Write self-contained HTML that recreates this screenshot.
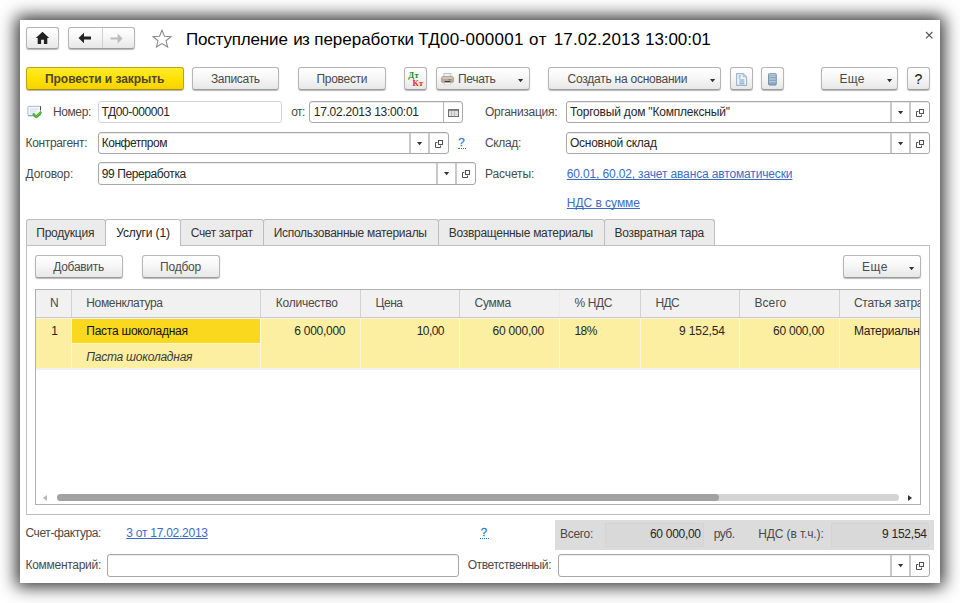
<!DOCTYPE html>
<html><head><meta charset="utf-8"><title>1C</title>
<style>
html,body{margin:0;padding:0;}
body{width:960px;height:603px;background:#fff;position:relative;overflow:hidden;font-family:"Liberation Sans",sans-serif;font-size:12px;}
body>*{position:absolute;box-sizing:border-box;}
.t{white-space:pre;}
.win{background:#fff;box-shadow:0 0 16px 4px rgba(0,0,0,.8);}
.btn{border:1px solid #b6b6b6;border-bottom-color:#9c9c9c;border-radius:3px;background:linear-gradient(#ffffff 0%,#f7f7f7 45%,#e7e7e7 100%);box-shadow:0 1px 1px rgba(0,0,0,.28);}
.ybtn{border:1px solid #c2a40e;border-bottom-color:#a98d10;border-radius:3px;background:linear-gradient(#ffeb30 0%,#ffe100 50%,#f6d300 100%);box-shadow:0 1px 1px rgba(0,0,0,.3);}
.fld{border:1px solid #a8a8a8;border-radius:3px;background:#fff;box-shadow:inset 0 1px 0 rgba(0,0,0,.08);}
.fld.ro{border-color:#d2d2d2;box-shadow:none;}
.vd{background:#c9c9c9;}
.tab{border:1px solid #bdbdbd;border-bottom:none;border-radius:3px 3px 0 0;background:#ebebeb;}
.tab.act{background:#fff;}
.panel{border:1px solid #c0c0c0;background:#fff;}
.tbl{border:1px solid #b0b0b0;background:#fff;}
.th{background:#f1f1f1;border-bottom:1px solid #c9c9c9;}
.ul{text-decoration:underline;}
svg{overflow:visible;}

</style></head>
<body>
<div class="win" style="left:20px;top:20px;width:920px;height:563px;"></div>
<div class="btn" style="left:26px;top:27px;width:33px;height:22px;"></div>
<svg style="left:35px;top:31px" width="15" height="14" viewBox="0 0 15 14"><path d="M7.5 0.8 L14.2 7 H12.3 V13 H8.9 V8.8 H6.1 V13 H2.7 V7 H0.8 Z" fill="#222"/></svg>
<div class="btn" style="left:68px;top:27px;width:67px;height:22px;"></div>
<div class="" style="left:101.5px;top:28px;width:1.0px;height:20px;background:#d0d0d0;"></div>
<svg style="left:78px;top:32px" width="14" height="12" viewBox="0 0 14 12"><path d="M0.5 6 L6 0.8 V4.6 H13 V7.4 H6 V11.2 Z" fill="#222"/></svg>
<svg style="left:110px;top:32.5px" width="13" height="11" viewBox="0 0 13 11"><path d="M12.6 5.5 L7.6 0.6 V4.5 H0.6 V6.5 H7.6 V10.4 Z" fill="#bcbcbc"/></svg>
<svg style="left:152px;top:29px" width="20" height="19" viewBox="0 0 20 19"><path d="M10 1.2 L12.5 7.2 L19 7.6 L14 11.8 L15.6 18 L10 14.6 L4.4 18 L6 11.8 L1 7.6 L7.5 7.2 Z" fill="#fff" stroke="#8a8a8a" stroke-width="1.1" stroke-linejoin="miter"/></svg>
<span class="t" style="left:185.90px;top:29.61px;font-size:17px;line-height:19px;letter-spacing:-0.158px;color:#000;">Поступление</span>
<span class="t" style="left:293.20px;top:29.61px;font-size:17px;line-height:19px;letter-spacing:-0.600px;color:#000;">из</span>
<span class="t" style="left:314.20px;top:29.61px;font-size:17px;line-height:19px;letter-spacing:-0.013px;color:#000;">переработки</span>
<span class="t" style="left:418.30px;top:29.61px;font-size:17px;line-height:19px;letter-spacing:0.246px;color:#000;">ТД00-000001</span>
<span class="t" style="left:529.00px;top:29.61px;font-size:17px;line-height:19px;letter-spacing:0.600px;color:#000;">от</span>
<span class="t" style="left:553.80px;top:29.61px;font-size:17px;line-height:19px;letter-spacing:0.123px;color:#000;">17.02.2013</span>
<span class="t" style="left:645.00px;top:29.61px;font-size:17px;line-height:19px;letter-spacing:-0.055px;color:#000;">13:00:01</span>
<svg style="left:925.2px;top:31.2px" width="8.4" height="8.4" viewBox="0 0 8.4 8.4"><path d="M1 1 L7.4 7.4 M7.4 1 L1 7.4" stroke="#5a5a5a" stroke-width="1.25" fill="none"/></svg>
<div class="ybtn" style="left:26px;top:67px;width:158px;height:23px;"></div>
<span class="t" style="left:45.00px;top:71.84px;font-size:12px;line-height:14px;letter-spacing:-0.048px;color:#4d4630;font-weight:bold;">Провести и закрыть</span>
<div class="btn" style="left:192px;top:67px;width:87px;height:23px;"></div>
<span class="t" style="left:210.91px;top:71.84px;font-size:12px;line-height:14px;letter-spacing:-0.300px;color:#4a4a4a;">Записать</span>
<div class="btn" style="left:298px;top:67px;width:88px;height:23px;"></div>
<span class="t" style="left:316.50px;top:71.84px;font-size:12px;line-height:14px;letter-spacing:-0.300px;color:#4a4a4a;">Провести</span>
<div class="btn" style="left:404px;top:67px;width:23px;height:23px;"></div>
<span class="t" style="left:408.20px;top:70.40px;font-size:8.5px;line-height:10.5px;letter-spacing:0.481px;color:#1a8a1a;font-weight:bold;font-family:'Liberation Serif',serif;">Дт</span>
<span class="t" style="left:412.60px;top:77.60px;font-size:8.5px;line-height:10.5px;letter-spacing:0.441px;color:#f02525;font-weight:bold;font-family:'Liberation Serif',serif;">Кт</span>
<div class="btn" style="left:436px;top:67px;width:94px;height:23px;"></div>
<svg style="left:441px;top:73.4px" width="13" height="12.2" viewBox="0 0 13 12.2"><rect x="2.9" y="0.4" width="7" height="4.6" fill="#e8f0f8" stroke="#a9bccf" stroke-width="0.8"/><rect x="0.4" y="3.6" width="12.2" height="6" rx="1.8" fill="#b9a99b" stroke="#a09488" stroke-width="0.7"/><rect x="1.2" y="4.2" width="10.6" height="1.6" rx="0.8" fill="#d8cfc7"/><rect x="7.4" y="6.2" width="1.3" height="1" fill="#e04030"/><rect x="9.2" y="6.2" width="1.3" height="1" fill="#3fae3f"/><rect x="3.6" y="8.2" width="5.8" height="1.5" fill="#222"/><rect x="3.4" y="9.6" width="6.2" height="2.3" fill="#fdfdfd" stroke="#c4c4c4" stroke-width="0.6"/></svg>
<span class="t" style="left:458.00px;top:71.84px;font-size:12px;line-height:14px;letter-spacing:-0.312px;color:#4a4a4a;">Печать</span>
<div class="btn" style="left:548px;top:67px;width:173px;height:23px;"></div>
<span class="t" style="left:567.50px;top:71.84px;font-size:12px;line-height:14px;letter-spacing:-0.237px;color:#4a4a4a;">Создать на основании</span>
<div class="btn" style="left:730px;top:67px;width:23px;height:23px;"></div>
<svg style="left:735.7px;top:72.8px" width="11.2" height="13" viewBox="0 0 11.2 13"><path d="M0.6 0.6 H7.2 L10.6 3.8 V12.4 H0.6 Z" fill="#edf3f9" stroke="#9db6ce" stroke-width="1.1" stroke-linejoin="round"/><path d="M7.2 0.8 V3.8 H10.4" fill="none" stroke="#9db6ce" stroke-width="0.9"/><path d="M2.6 3 H5 M2.6 5 H4.4 M3.4 7 H8.4 M3.4 9 H8.4 M3.4 10.8 H8.4" stroke="#6f95bd" stroke-width="0.9"/></svg>
<div class="btn" style="left:761px;top:67px;width:23px;height:23px;"></div>
<svg style="left:768.2px;top:72.8px" width="8.8" height="12.6" viewBox="0 0 8.8 12.6"><rect x="0.5" y="0.5" width="7.8" height="11.6" rx="1" fill="#8ba6bf" stroke="#6d8ea9" stroke-width="0.9"/><path d="M1 3.2 H7.8 M1 6 H7.8 M1 8.8 H7.8 M1 1.2 H7.8" stroke="#c9d8e5" stroke-width="0.9"/></svg>
<div class="btn" style="left:821px;top:67px;width:77px;height:23px;"></div>
<span class="t" style="left:839.50px;top:71.84px;font-size:12px;line-height:14px;letter-spacing:0.289px;color:#4a4a4a;">Еще</span>
<div class="btn" style="left:907px;top:67px;width:23px;height:23px;"></div>
<span class="t" style="left:914.60px;top:70.95px;font-size:14px;line-height:16px;letter-spacing:0.000px;color:#222;-webkit-text-stroke:0.15px #222;">?</span>
<svg style="left:518.4px;top:78.9px" width="5.2" height="3.2" viewBox="0 0 5.2 3.2"><path d="M0 0 H5.2 L2.6 3.2 Z" fill="#333"/></svg>
<svg style="left:709.9px;top:78.9px" width="5.2" height="3.2" viewBox="0 0 5.2 3.2"><path d="M0 0 H5.2 L2.6 3.2 Z" fill="#333"/></svg>
<svg style="left:886.9px;top:78.9px" width="5.2" height="3.2" viewBox="0 0 5.2 3.2"><path d="M0 0 H5.2 L2.6 3.2 Z" fill="#333"/></svg>
<svg style="left:27px;top:105px" width="15" height="14" viewBox="0 0 15 14"><rect x="0.9" y="1.3" width="12.6" height="9.4" rx="1" fill="#f3f6f9" stroke="#a9bac9" stroke-width="1"/><path d="M13.5 1.2 V5.2" stroke="#4a4a4a" stroke-width="1"/><path d="M1.2 10.7 H7" stroke="#6fa5a5" stroke-width="1"/><path d="M3 4.2 H11 M3 6.2 H9.5 M3 8.2 H7" stroke="#d4dde6" stroke-width="0.9"/><path d="M6.8 9.4 L9.2 12 L13.6 7.6" fill="none" stroke="#3fa526" stroke-width="2.5" stroke-linecap="round" stroke-linejoin="round"/><path d="M7 9.3 L9.2 11.6 L13.5 7.4" fill="none" stroke="#7ed052" stroke-width="0.9" stroke-linecap="round" stroke-linejoin="round"/></svg>
<span class="t" style="left:53.00px;top:104.84px;font-size:12px;line-height:14px;letter-spacing:-0.406px;color:#4a4a4a;">Номер:</span>
<div class="fld ro" style="left:98px;top:101px;width:184px;height:22px;"></div>
<span class="t" style="left:101.50px;top:104.84px;font-size:12px;line-height:14px;letter-spacing:-0.395px;color:#262626;">ТД00-000001</span>
<span class="t" style="left:291.25px;top:104.84px;font-size:12px;line-height:14px;letter-spacing:-0.600px;color:#4a4a4a;">от:</span>
<div class="fld" style="left:309px;top:101px;width:154px;height:22px;"></div>
<div class="" style="left:443px;top:102px;width:1px;height:20px;background:#b4b4b4;"></div>
<span class="t" style="left:313.75px;top:104.84px;font-size:12px;line-height:14px;letter-spacing:-0.270px;color:#262626;">17.02.2013 13:00:01</span>
<svg style="left:448px;top:109px" width="11" height="8" viewBox="0 0 11 8"><rect x="0.5" y="0.5" width="10" height="7" fill="#fff" stroke="#666" stroke-width="1"/><rect x="0.5" y="0.5" width="10" height="1.8" fill="#888"/><path d="M0.5 4 H10.5 M0.5 5.8 H10.5 M3.5 2.3 V7.5 M6.5 2.3 V7.5" stroke="#aaa" stroke-width="0.7"/></svg>
<span class="t" style="left:485.00px;top:104.84px;font-size:12px;line-height:14px;letter-spacing:-0.293px;color:#4a4a4a;">Организация:</span>
<div class="fld" style="left:566px;top:101px;width:364px;height:22px;"></div>
<div class="vd" style="left:909px;top:102px;width:2px;height:20px;"></div>
<svg style="left:916px;top:108.7px" width="8" height="8" viewBox="0 0 8 8"><rect x="3.5" y="0.5" width="4" height="4" fill="#fff" stroke="#505050" stroke-width="1"/><path d="M2.4 2.5 H0.5 V7.5 H5.5 V5.6" fill="none" stroke="#505050" stroke-width="1"/></svg>
<div class="vd" style="left:890px;top:102px;width:2px;height:20px;"></div>
<svg style="left:898.4px;top:111.10000000000001px" width="5.2" height="3.2" viewBox="0 0 5.2 3.2"><path d="M0 0 H5.2 L2.6 3.2 Z" fill="#333"/></svg>
<span class="t" style="left:570.00px;top:104.84px;font-size:12px;line-height:14px;letter-spacing:-0.191px;color:#262626;">Торговый дом "Комплексный"</span>
<span class="t" style="left:25.50px;top:135.84px;font-size:12px;line-height:14px;letter-spacing:-0.339px;color:#4a4a4a;">Контрагент:</span>
<div class="fld" style="left:98px;top:132px;width:351px;height:22px;"></div>
<div class="vd" style="left:428px;top:133px;width:2px;height:20px;"></div>
<svg style="left:435px;top:139.7px" width="8" height="8" viewBox="0 0 8 8"><rect x="3.5" y="0.5" width="4" height="4" fill="#fff" stroke="#505050" stroke-width="1"/><path d="M2.4 2.5 H0.5 V7.5 H5.5 V5.6" fill="none" stroke="#505050" stroke-width="1"/></svg>
<div class="vd" style="left:409px;top:133px;width:2px;height:20px;"></div>
<svg style="left:417.4px;top:142.1px" width="5.2" height="3.2" viewBox="0 0 5.2 3.2"><path d="M0 0 H5.2 L2.6 3.2 Z" fill="#333"/></svg>
<span class="t" style="left:101.75px;top:135.84px;font-size:12px;line-height:14px;letter-spacing:-0.476px;color:#262626;">Конфетпром</span>
<span class="t" style="left:458.20px;top:135.67px;font-size:11.5px;line-height:13.5px;letter-spacing:0.000px;color:#2a7ccf;-webkit-text-stroke:0.3px #2a7ccf;">?</span>
<div class="" style="left:457.5px;top:148px;width:8.5px;height:1px;border-top:1px dotted #2a7ccf;"></div>
<span class="t" style="left:485.00px;top:135.84px;font-size:12px;line-height:14px;letter-spacing:-0.362px;color:#4a4a4a;">Склад:</span>
<div class="fld" style="left:566px;top:132px;width:364px;height:22px;"></div>
<div class="vd" style="left:909px;top:133px;width:2px;height:20px;"></div>
<svg style="left:916px;top:139.7px" width="8" height="8" viewBox="0 0 8 8"><rect x="3.5" y="0.5" width="4" height="4" fill="#fff" stroke="#505050" stroke-width="1"/><path d="M2.4 2.5 H0.5 V7.5 H5.5 V5.6" fill="none" stroke="#505050" stroke-width="1"/></svg>
<div class="vd" style="left:890px;top:133px;width:2px;height:20px;"></div>
<svg style="left:898.4px;top:142.1px" width="5.2" height="3.2" viewBox="0 0 5.2 3.2"><path d="M0 0 H5.2 L2.6 3.2 Z" fill="#333"/></svg>
<span class="t" style="left:570.00px;top:135.84px;font-size:12px;line-height:14px;letter-spacing:-0.263px;color:#262626;">Основной склад</span>
<span class="t" style="left:25.50px;top:166.84px;font-size:12px;line-height:14px;letter-spacing:-0.129px;color:#4a4a4a;">Договор:</span>
<div class="fld" style="left:98px;top:162px;width:378px;height:23px;"></div>
<div class="vd" style="left:455px;top:163px;width:2px;height:21px;"></div>
<svg style="left:462px;top:169.7px" width="8" height="8" viewBox="0 0 8 8"><rect x="3.5" y="0.5" width="4" height="4" fill="#fff" stroke="#505050" stroke-width="1"/><path d="M2.4 2.5 H0.5 V7.5 H5.5 V5.6" fill="none" stroke="#505050" stroke-width="1"/></svg>
<div class="vd" style="left:436px;top:163px;width:2px;height:21px;"></div>
<svg style="left:444.4px;top:172.1px" width="5.2" height="3.2" viewBox="0 0 5.2 3.2"><path d="M0 0 H5.2 L2.6 3.2 Z" fill="#333"/></svg>
<span class="t" style="left:101.75px;top:166.84px;font-size:12px;line-height:14px;letter-spacing:-0.397px;color:#262626;">99 Переработка</span>
<span class="t" style="left:485.00px;top:166.84px;font-size:12px;line-height:14px;letter-spacing:-0.127px;color:#4a4a4a;">Расчеты:</span>
<span class="t" style="left:566.75px;top:166.84px;font-size:12px;line-height:14px;letter-spacing:-0.146px;color:#3a6cc8;text-decoration:underline;text-decoration-skip-ink:none;text-underline-offset:0.6px;text-decoration-thickness:1px;">60.01, 60.02, зачет аванса автоматически</span>
<span class="t" style="left:566.75px;top:195.84px;font-size:12px;line-height:14px;letter-spacing:-0.030px;color:#3a6cc8;text-decoration:underline;text-decoration-skip-ink:none;text-underline-offset:0.6px;text-decoration-thickness:1px;">НДС в сумме</span>
<div class="panel" style="left:26px;top:244.5px;width:904px;height:270.5px;"></div>
<div class="tab" style="left:26px;top:219px;width:80px;height:26px;"></div>
<div class="tab act" style="left:105px;top:219px;width:76px;height:27px;"></div>
<div class="tab" style="left:180px;top:219px;width:84px;height:26px;"></div>
<div class="tab" style="left:263px;top:219px;width:175.5px;height:26px;"></div>
<div class="tab" style="left:437.5px;top:219px;width:167.5px;height:26px;"></div>
<div class="tab" style="left:604px;top:219px;width:111px;height:26px;"></div>
<span class="t" style="left:36.25px;top:225.84px;font-size:12px;line-height:14px;letter-spacing:-0.225px;color:#333;">Продукция</span>
<span class="t" style="left:116.25px;top:225.84px;font-size:12px;line-height:14px;letter-spacing:-0.128px;color:#222;">Услуги (1)</span>
<span class="t" style="left:190.75px;top:225.84px;font-size:12px;line-height:14px;letter-spacing:-0.364px;color:#333;">Счет затрат</span>
<span class="t" style="left:273.75px;top:225.84px;font-size:12px;line-height:14px;letter-spacing:-0.294px;color:#333;">Использованные материалы</span>
<span class="t" style="left:448.75px;top:225.84px;font-size:12px;line-height:14px;letter-spacing:-0.283px;color:#333;">Возвращенные материалы</span>
<span class="t" style="left:614.50px;top:225.84px;font-size:12px;line-height:14px;letter-spacing:-0.269px;color:#333;">Возвратная тара</span>
<div class="btn" style="left:35px;top:255px;width:88px;height:23px;"></div>
<span class="t" style="left:53.25px;top:259.84px;font-size:12px;line-height:14px;letter-spacing:-0.292px;color:#4a4a4a;">Добавить</span>
<div class="btn" style="left:142px;top:255px;width:78px;height:23px;"></div>
<span class="t" style="left:160.00px;top:259.84px;font-size:12px;line-height:14px;letter-spacing:-0.203px;color:#4a4a4a;">Подбор</span>
<div class="btn" style="left:843px;top:255px;width:78px;height:23px;"></div>
<span class="t" style="left:862.00px;top:259.84px;font-size:12px;line-height:14px;letter-spacing:0.489px;color:#4a4a4a;">Еще</span>
<svg style="left:908.9px;top:266.9px" width="5.2" height="3.2" viewBox="0 0 5.2 3.2"><path d="M0 0 H5.2 L2.6 3.2 Z" fill="#333"/></svg>
<div class="tbl" style="left:35px;top:289px;width:886px;height:216px;"></div>
<div class="th" style="left:36px;top:290px;width:884px;height:28px;"></div>
<div class="" style="left:71px;top:290px;width:1px;height:27px;background:#d2d2d2;"></div>
<div class="" style="left:260px;top:290px;width:1px;height:27px;background:#d2d2d2;"></div>
<div class="" style="left:360px;top:290px;width:1px;height:27px;background:#d2d2d2;"></div>
<div class="" style="left:459px;top:290px;width:1px;height:27px;background:#d2d2d2;"></div>
<div class="" style="left:559px;top:290px;width:1px;height:27px;background:#ebebeb;"></div>
<div class="" style="left:640px;top:290px;width:1px;height:27px;background:#d2d2d2;"></div>
<div class="" style="left:739px;top:290px;width:1px;height:27px;background:#d2d2d2;"></div>
<div class="" style="left:839px;top:290px;width:1px;height:27px;background:#d2d2d2;"></div>
<span class="t" style="left:50.00px;top:295.84px;font-size:12px;line-height:14px;letter-spacing:-0.250px;color:#4a4a4a;">N</span>
<span class="t" style="left:86.25px;top:295.84px;font-size:12px;line-height:14px;letter-spacing:-0.344px;color:#4a4a4a;">Номенклатура</span>
<span class="t" style="left:275.75px;top:295.84px;font-size:12px;line-height:14px;letter-spacing:-0.245px;color:#4a4a4a;">Количество</span>
<span class="t" style="left:375.50px;top:295.84px;font-size:12px;line-height:14px;letter-spacing:-0.453px;color:#4a4a4a;">Цена</span>
<span class="t" style="left:474.50px;top:295.84px;font-size:12px;line-height:14px;letter-spacing:-0.242px;color:#4a4a4a;">Сумма</span>
<span class="t" style="left:574.50px;top:295.84px;font-size:12px;line-height:14px;letter-spacing:-0.367px;color:#4a4a4a;">% НДС</span>
<span class="t" style="left:655.50px;top:295.84px;font-size:12px;line-height:14px;letter-spacing:-0.600px;color:#4a4a4a;">НДС</span>
<span class="t" style="left:754.40px;top:295.84px;font-size:12px;line-height:14px;letter-spacing:0.108px;color:#4a4a4a;">Всего</span>
<div class="" style="left:36px;top:318px;width:884px;height:1px;background:#f6f3e4;"></div>
<div class="" style="left:36px;top:319px;width:884px;height:49px;background:#fcefa1;"></div>
<div class="" style="left:72px;top:319px;width:188px;height:24px;background:#fad81e;"></div>
<div class="" style="left:72px;top:343px;width:188px;height:1px;background:#fdf6c8;"></div>
<div class="" style="left:71px;top:319px;width:1px;height:49px;background:#fdf7d4;"></div>
<div class="" style="left:260px;top:319px;width:1px;height:49px;background:#fdf7d4;"></div>
<div class="" style="left:360px;top:319px;width:1px;height:49px;background:#fdf7d4;"></div>
<div class="" style="left:459px;top:319px;width:1px;height:49px;background:#fdf7d4;"></div>
<div class="" style="left:559px;top:319px;width:1px;height:49px;background:#fdf7d4;"></div>
<div class="" style="left:640px;top:319px;width:1px;height:49px;background:#fdf7d4;"></div>
<div class="" style="left:739px;top:319px;width:1px;height:49px;background:#fdf7d4;"></div>
<div class="" style="left:839px;top:319px;width:1px;height:49px;background:#fdf7d4;"></div>
<div class="" style="left:36px;top:368px;width:884px;height:2px;background:#f1f1f1;"></div>
<span class="t" style="left:51.25px;top:323.84px;font-size:12px;line-height:14px;letter-spacing:0.000px;color:#262626;">1</span>
<span class="t" style="left:86.25px;top:323.84px;font-size:12px;line-height:14px;letter-spacing:-0.233px;color:#111;">Паста шоколадная</span>
<span class="t" style="left:86.25px;top:349.84px;font-size:12px;line-height:14px;letter-spacing:-0.231px;color:#3a3a3a;font-style:italic;">Паста шоколадная</span>
<span class="t" style="left:294.25px;top:323.84px;font-size:12px;line-height:14px;letter-spacing:-0.268px;color:#262626;">6 000,000</span>
<span class="t" style="left:416.75px;top:323.84px;font-size:12px;line-height:14px;letter-spacing:-0.570px;color:#262626;">10,00</span>
<span class="t" style="left:492.50px;top:323.84px;font-size:12px;line-height:14px;letter-spacing:-0.205px;color:#262626;">60 000,00</span>
<span class="t" style="left:574.50px;top:323.84px;font-size:12px;line-height:14px;letter-spacing:-0.600px;color:#262626;">18%</span>
<span class="t" style="left:679.00px;top:323.84px;font-size:12px;line-height:14px;letter-spacing:-0.103px;color:#262626;">9 152,54</span>
<span class="t" style="left:773.00px;top:323.84px;font-size:12px;line-height:14px;letter-spacing:-0.236px;color:#262626;">60 000,00</span>
<div style="left:840px;top:290px;width:80px;height:78px;overflow:hidden;"><span class="t" style="position:absolute;left:14px;top:6.2px;font-size:12px;line-height:14px;letter-spacing:-0.3px;color:#4a4a4a;">Статья затрат</span><span class="t" style="position:absolute;left:14px;top:34.2px;font-size:12px;line-height:14px;letter-spacing:-0.3px;color:#1c1c1c;">Материальные</span></div>
<div class="" style="left:57px;top:494px;width:842px;height:7px;background:#d4d4d4;border-radius:4px;"></div>
<div class="" style="left:57px;top:494px;width:661.5px;height:7px;background:#a2a2a2;border-radius:4px;"></div>
<svg style="left:43px;top:494.5px" width="4" height="6" viewBox="0 0 4 6"><path d="M4 0 V6 L0 3 Z" fill="#b5b5b5"/></svg>
<svg style="left:908px;top:494.5px" width="4" height="6" viewBox="0 0 4 6"><path d="M0 0 V6 L4 3 Z" fill="#333"/></svg>
<span class="t" style="left:25.50px;top:525.84px;font-size:12px;line-height:14px;letter-spacing:-0.410px;color:#4a4a4a;">Счет-фактура:</span>
<span class="t" style="left:126.25px;top:525.84px;font-size:12px;line-height:14px;letter-spacing:-0.254px;color:#3a6cc8;text-decoration:underline;text-decoration-skip-ink:none;text-underline-offset:0.6px;text-decoration-thickness:1px;">3 от 17.02.2013</span>
<span class="t" style="left:480.70px;top:525.67px;font-size:11.5px;line-height:13.5px;letter-spacing:0.000px;color:#2a7ccf;-webkit-text-stroke:0.3px #2a7ccf;">?</span>
<div class="" style="left:480px;top:538px;width:8.5px;height:1px;border-top:1px dotted #2a7ccf;"></div>
<div class="" style="left:555px;top:520px;width:379px;height:30px;background:#dcdcdc;"></div>
<div class="" style="left:605px;top:523px;width:99px;height:24px;background:#d9d9d9;border:1px solid #d4d4d4;"></div>
<div class="" style="left:831px;top:523px;width:98px;height:24px;background:#d9d9d9;border:1px solid #d4d4d4;"></div>
<span class="t" style="left:560.00px;top:526.84px;font-size:12px;line-height:14px;letter-spacing:-0.303px;color:#4a4a4a;">Всего:</span>
<span class="t" style="left:650.00px;top:526.84px;font-size:12px;line-height:14px;letter-spacing:-0.299px;color:#262626;">60 000,00</span>
<span class="t" style="left:713.75px;top:526.84px;font-size:12px;line-height:14px;letter-spacing:-0.547px;color:#4a4a4a;">руб.</span>
<span class="t" style="left:758.25px;top:526.84px;font-size:12px;line-height:14px;letter-spacing:-0.118px;color:#4a4a4a;">НДС (в т.ч.):</span>
<span class="t" style="left:882.00px;top:526.84px;font-size:12px;line-height:14px;letter-spacing:-0.246px;color:#262626;">9 152,54</span>
<span class="t" style="left:25.50px;top:558.34px;font-size:12px;line-height:14px;letter-spacing:-0.288px;color:#4a4a4a;">Комментарий:</span>
<div class="fld" style="left:107px;top:554px;width:352px;height:23px;"></div>
<span class="t" style="left:467.70px;top:558.34px;font-size:12px;line-height:14px;letter-spacing:-0.404px;color:#4a4a4a;">Ответственный:</span>
<div class="fld" style="left:558px;top:554px;width:372px;height:23px;"></div>
<div class="vd" style="left:909px;top:555px;width:2px;height:21px;"></div>
<svg style="left:916px;top:561.7px" width="8" height="8" viewBox="0 0 8 8"><rect x="3.5" y="0.5" width="4" height="4" fill="#fff" stroke="#505050" stroke-width="1"/><path d="M2.4 2.5 H0.5 V7.5 H5.5 V5.6" fill="none" stroke="#505050" stroke-width="1"/></svg>
<div class="vd" style="left:890px;top:555px;width:2px;height:21px;"></div>
<svg style="left:898.4px;top:564.1px" width="5.2" height="3.2" viewBox="0 0 5.2 3.2"><path d="M0 0 H5.2 L2.6 3.2 Z" fill="#333"/></svg>
</body></html>
